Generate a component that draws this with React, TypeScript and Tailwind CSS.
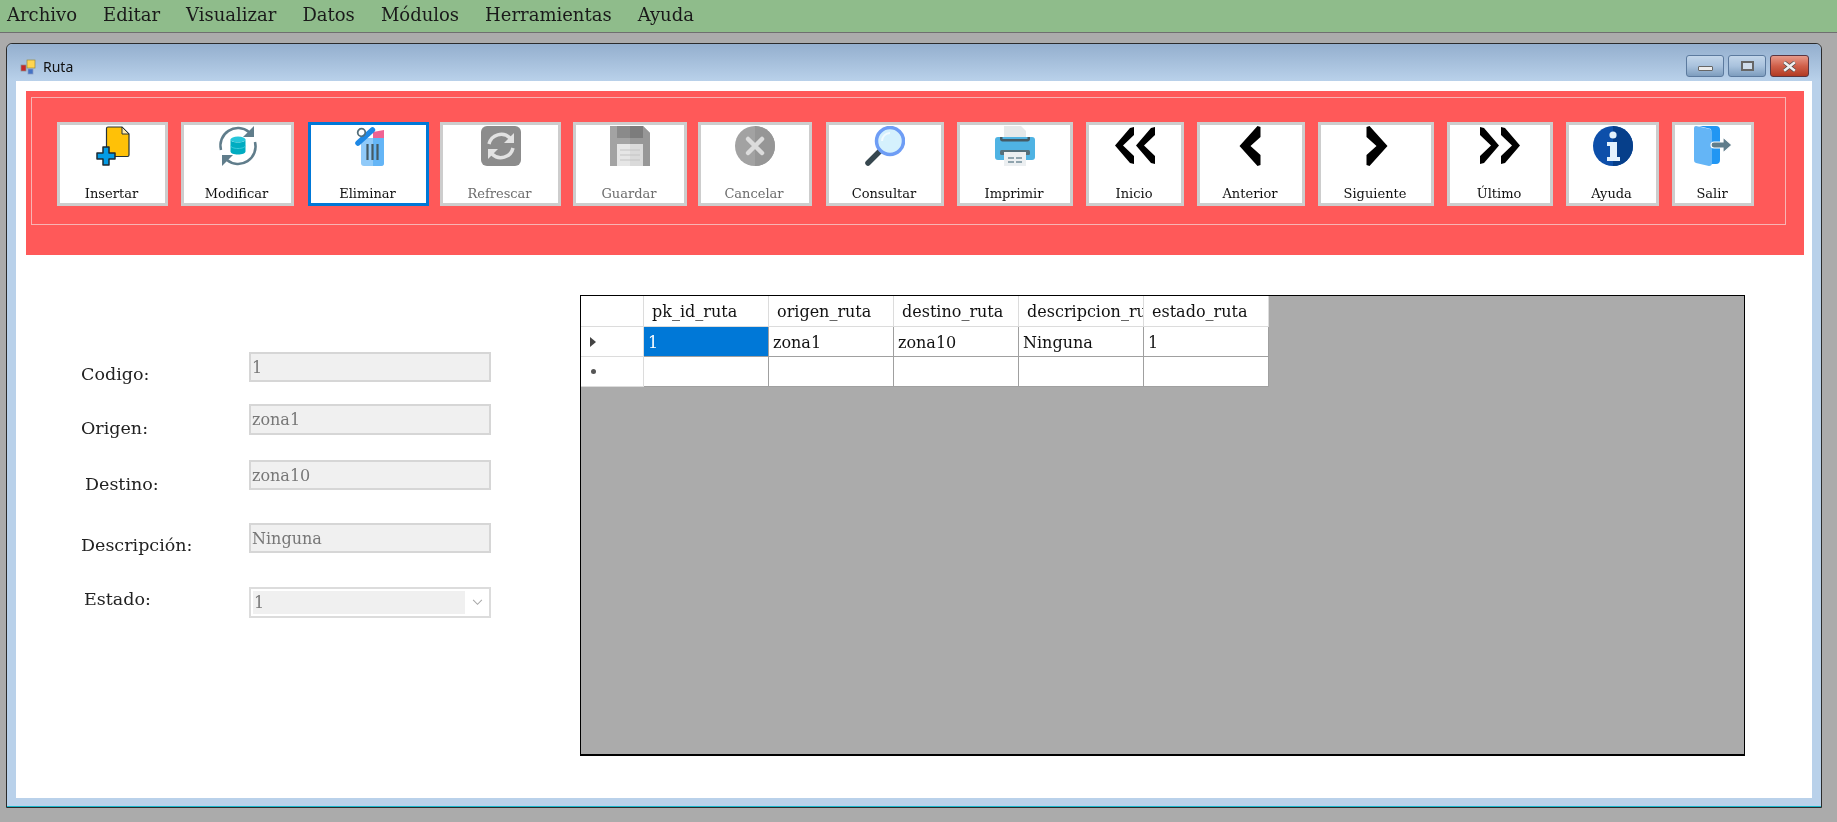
import type { ReactNode } from "react";

const slab = "font-['DejaVu_Serif','Liberation_Serif',serif]";

function InsertIcon() {
  return (
    <svg viewBox="0 0 40 40" className="h-10 w-10">
      <path d="M15 1h14l7 7v21a1.500 1.500 0 0 1-1.500 1.500H15a1.500 1.500 0 0 1-1.500-1.500V2.500A1.500 1.500 0 0 1 15 1z" fill="#ffc107" stroke="#263238" strokeWidth="1.200" />
      <path d="M29 1v7h7z" fill="#ffe9a8" stroke="#263238" strokeWidth="1" />
      <path d="M10 21h6v6h6v6h-6v6h-6v-6H4v-6h6z" fill="#039be5" stroke="#1c2b33" strokeWidth="1.500" strokeLinejoin="round" />
    </svg>
  );
}

function ModifyIcon() {
  return (
    <svg viewBox="0 0 40 40" className="h-10 w-10" fill="none">
      <path d="M3 24A17.500 17.500 0 0 1 31 6" stroke="#607d8b" strokeWidth="2.500" />
      <path d="M37 16A17.500 17.500 0 0 1 9 34" stroke="#607d8b" strokeWidth="2.500" />
      <path d="M36 0v11H25z" fill="#607d8b" />
      <path d="M4 40V29h11z" fill="#607d8b" />
      <ellipse cx="20" cy="13.500" rx="7.500" ry="3" fill="#26c6da" />
      <path d="M12.500 13.500v12c0 1.700 3.400 3 7.500 3s7.500-1.300 7.500-3v-12c0 1.700-3.400 3-7.500 3s-7.500-1.300-7.500-3z" fill="#00acc1" />
      <path d="M12.500 19.500c0 1.700 3.400 3 7.500 3s7.500-1.300 7.500-3" stroke="#4dd0e1" strokeWidth="0.800" />
    </svg>
  );
}

function DeleteIcon() {
  return (
    <svg viewBox="0 0 40 40" className="h-10 w-10">
      <path d="M12 12h23v25a3 3 0 0 1-3 3H15a3 3 0 0 1-3-3z" fill="#90caf9" />
      <path d="M24 12h11v25a3 3 0 0 1-3 3h-8z" fill="#64b5f6" />
      <path d="M24 6l11-2v8H24z" fill="#f06292" />
      <rect x="4" y="8" width="25" height="5.500" rx="2.500" transform="rotate(-42 16 11)" fill="#1e88e5" />
      <circle cx="12.500" cy="6.500" r="3.800" fill="none" stroke="#546e7a" strokeWidth="1.800" />
      <path d="M18.500 18v16M23.500 18v16M28.500 18v16" stroke="#455a64" strokeWidth="2.200" />
    </svg>
  );
}

function RefreshIcon() {
  return (
    <svg viewBox="0 0 40 40" className="h-10 w-10" fill="none">
      <rect width="40" height="40" rx="6" fill="#8c8c8c" />
      <path d="M8 18a12.500 12.500 0 0 1 21-6" stroke="#e2e2e2" strokeWidth="3.500" />
      <path d="M32 22a12.500 12.500 0 0 1-21 6" stroke="#e2e2e2" strokeWidth="3.500" />
      <path d="M33 7v10H23z" fill="#e2e2e2" />
      <path d="M7 33V23h10z" fill="#e2e2e2" />
    </svg>
  );
}

function SaveIcon() {
  return (
    <svg viewBox="0 0 40 40" className="h-10 w-10">
      <path d="M0 0h33l7 7v33H0z" fill="#a3a3a3" />
      <path d="M20 0h13l7 7v33H20z" fill="#979797" />
      <path d="M7 0h26v12H7z" fill="#8a8a8a" />
      <path d="M20 0h13v12H20z" fill="#7c7c7c" />
      <rect x="7" y="18" width="26" height="22" fill="#e6e6e6" />
      <rect x="20" y="18" width="13" height="22" fill="#dadada" />
      <path d="M10 24h20M10 29h20M10 34h20" stroke="#c4c4c4" strokeWidth="1.200" />
    </svg>
  );
}

function CancelIcon() {
  return (
    <svg viewBox="0 0 40 40" className="h-10 w-10">
      <circle cx="20" cy="20" r="20" fill="#a2a2a2" />
      <path d="M20 0a20 20 0 0 1 0 40z" fill="#969696" />
      <path d="M13 13l14 14M27 13L13 27" stroke="#dcdcdc" strokeWidth="4.500" strokeLinecap="round" />
    </svg>
  );
}

function SearchIcon() {
  return (
    <svg viewBox="0 0 40 40" className="h-10 w-10">
      <path d="M3 37l12-12" stroke="#37474f" strokeWidth="5.500" strokeLinecap="round" />
      <circle cx="25" cy="15" r="13.500" fill="#d5f1fd" stroke="#6e9df5" strokeWidth="3.500" />
      <path d="M17 15a8 8 0 0 1 8-8" stroke="#f2fbff" strokeWidth="2" fill="none" />
    </svg>
  );
}

function PrintIcon() {
  return (
    <svg viewBox="0 0 40 40" className="h-10 w-10">
      <path d="M9 0h17l5 5v10H9z" fill="#e6e9ea" />
      <path d="M3 11h34a3 3 0 0 1 3 3v17a3 3 0 0 1-3 3H3a3 3 0 0 1-3-3V14a3 3 0 0 1 3-3z" fill="#4fb3e3" />
      <path d="M5 11v2c0 1.500 1 2.500 2.500 2.500h25c1.500 0 2.500-1 2.500-2.500v-2h-2.500v2h-25v-2z" fill="#455a64" />
      <rect x="5" y="24" width="30" height="5" rx="1.500" fill="#546e7a" />
      <rect x="9" y="26" width="22" height="14" fill="#eceff1" />
      <path d="M13 31h6v2h-6zM21 31h6v2h-6zM13 35h6v2h-6zM21 35h6v2h-6z" fill="#90a4ae" />
    </svg>
  );
}

function Chevrons({ dir, double }: { dir: "left" | "right"; double?: boolean }) {
  const half = "M0 19.500L15 2l4-1v8L8 19.500 19 30v8l-4-1z";
  return (
    <svg viewBox="0 0 40 40" className={dir === "right" ? "h-10 w-10 -scale-x-100" : "h-10 w-10"}>
      {double ? (
        <>
          <path d={half} fill="#000" />
          <path d={half} transform="translate(21 0)" fill="#000" />
        </>
      ) : (
        <path d="M26.500 0l-18 20 18 20 3-1V29l-10-9 10-9V1z" fill="#000" />
      )}
    </svg>
  );
}

function InfoIcon() {
  return (
    <svg viewBox="0 0 40 40" className="h-10 w-10">
      <circle cx="20" cy="20" r="20" fill="#0d4faa" />
      <path d="M20 0a20 20 0 0 1 0 40z" fill="#063f8a" />
      <circle cx="20" cy="9" r="3.600" fill="#e3f2fd" />
      <path d="M14 16h10v15h3v4H14v-4h3V20h-3z" fill="#e3f2fd" />
    </svg>
  );
}

function ExitIcon() {
  return (
    <svg viewBox="0 0 40 40" className="h-10 w-10">
      <path d="M6 0h17a4 4 0 0 1 4 4v30a4 4 0 0 1-4 4h-5V3z" fill="#2196f3" />
      <path d="M3 0l14 3a3 3 0 0 1 2 3v31a3 3 0 0 1-3 3l-13-3a3 3 0 0 1-2-3V2a2 2 0 0 1 2-2z" fill="#64b5f6" />
      <path d="M21 16h9v-5l9 8-9 8v-5h-9a3 3 0 0 1 0-6z" fill="#607d8b" stroke="#fff" strokeWidth="1.200" />
    </svg>
  );
}

type Tool = { label: string; icon: ReactNode; cls: string; disabled?: boolean; active?: boolean };

const tools: Tool[] = [
  { label: "Insertar", icon: <InsertIcon />, cls: "w-[111px]" },
  { label: "Modificar", icon: <ModifyIcon />, cls: "w-[113px] ml-[13px]" },
  { label: "Eliminar", icon: <DeleteIcon />, cls: "w-[121px] ml-[14px]", active: true },
  { label: "Refrescar", icon: <RefreshIcon />, cls: "w-[121px] ml-[11px]", disabled: true },
  { label: "Guardar", icon: <SaveIcon />, cls: "w-[114px] ml-[12px]", disabled: true },
  { label: "Cancelar", icon: <CancelIcon />, cls: "w-[114px] ml-[11px]", disabled: true },
  { label: "Consultar", icon: <SearchIcon />, cls: "w-[118px] ml-[14px]" },
  { label: "Imprimir", icon: <PrintIcon />, cls: "w-[116px] ml-[13px]" },
  { label: "Inicio", icon: <Chevrons dir="left" double />, cls: "w-[98px] ml-[13px]" },
  { label: "Anterior", icon: <Chevrons dir="left" />, cls: "w-[108px] ml-[13px]" },
  { label: "Siguiente", icon: <Chevrons dir="right" />, cls: "w-[116px] ml-[13px]" },
  { label: "Último", icon: <Chevrons dir="right" double />, cls: "w-[106px] ml-[13px]" },
  { label: "Ayuda", icon: <InfoIcon />, cls: "w-[93px] ml-[13px]" },
  { label: "Salir", icon: <ExitIcon />, cls: "w-[82px] ml-[13px]" },
];

function ToolButton({ tool }: { tool: Tool }) {
  return (
    <div
      className={`flex h-[84px] shrink-0 flex-col items-center bg-white pt-px ${tool.cls} ${
        tool.active ? "border-[3px] border-[#0078d7]" : "border-[3px] border-[#cdcdcd]"
      }`}
    >
      {tool.icon}
      <span className={`mt-[19px] pr-[2px] text-[13px] leading-[18px] ${tool.disabled ? "text-[#6d6d6d]" : "text-[#111]"}`}>
        {tool.label}
      </span>
    </div>
  );
}

const fields = [
  { label: "Codigo:", value: "1", row: "h-[30px]", labelCls: "pt-[12px]" },
  { label: "Origen:", value: "zona1", row: "h-[31px] mt-[22px]", labelCls: "pt-[14px]" },
  { label: "Destino:", value: "zona10", row: "h-[30px] mt-[25px]", labelCls: "pt-[14px] pl-[4px]" },
  { label: "Descripción:", value: "Ninguna", row: "h-[30px] mt-[33px]", labelCls: "pt-[12px]" },
];

function FieldLabel({ text, cls }: { text: string; cls: string }) {
  return <div className={`h-full w-[168px] shrink-0 text-[17.5px] leading-[20px] text-[#222] ${cls}`}>{text}</div>;
}

const columns = ["pk_id_ruta", "origen_ruta", "destino_ruta", "descripcion_ruta", "estado_ruta"];
const firstRow = ["1", "zona1", "zona10", "Ninguna", "1"];

function DataGrid() {
  return (
    <div className="mt-[40px] h-[461px] w-[1165px] border border-b-2 border-black bg-[#ababab]">
      <div className="grid w-fit grid-cols-[63px_125px_125px_125px_125px_125px] grid-rows-[31px_30px_30px] text-[16px] text-[#111]">
        <div className="border-r border-b border-[#dcdcdc] bg-white" />
        {columns.map((c) => (
          <div key={c} className="overflow-hidden whitespace-nowrap border-r border-b border-[#dcdcdc] bg-white pl-[8px] leading-[31px]">
            {c}
          </div>
        ))}

        <div className="flex items-center border-r border-b border-[#dcdcdc] bg-white pl-[9px]">
          <span className="h-0 w-0 border-y-[5px] border-l-[6px] border-y-transparent border-l-[#444]" />
        </div>
        {firstRow.map((v, i) => (
          <div
            key={i}
            className={`border-r border-b border-[#a0a0a0] pl-[4px] leading-[31px] ${i === 0 ? "bg-[#0078d7] text-white" : "bg-white"}`}
          >
            {v}
          </div>
        ))}

        <div className="flex items-center border-r border-b border-[#dcdcdc] bg-white pl-[10px]">
          <span className="h-[5px] w-[5px] rounded-full bg-[#555]" />
        </div>
        {firstRow.map((_, i) => (
          <div key={i} className="border-r border-b border-[#a0a0a0] bg-white" />
        ))}
      </div>
    </div>
  );
}

export default function App() {
  return (
    <div className={`flex h-screen flex-col overflow-hidden bg-[#ababab] blur-[0.35px] ${slab}`}>
      <nav className="flex h-[33px] shrink-0 items-center gap-[26px] border-b border-[#6f6f6f] bg-[#8fbc8b] pb-[4px] pl-[7px] text-[18px] text-[#1a1a1a]">
        <span>Archivo</span>
        <span>Editar</span>
        <span>Visualizar</span>
        <span>Datos</span>
        <span>Módulos</span>
        <span>Herramientas</span>
        <span>Ayuda</span>
      </nav>

      <div className="mt-[10px] ml-[6px] flex h-[765px] w-[1816px] flex-col rounded-t-[6px] border border-[#2b2b2b] bg-[#b9d1ea]">
        <div className="flex h-[37px] shrink-0 items-center rounded-t-[6px] bg-gradient-to-b from-[#94afce] to-[#b9d1ea] pt-[8px] pr-[12px] pl-[13px]">
          <svg viewBox="0 0 16 16" className="h-4 w-4">
            <rect x="1" y="6" width="5" height="6" fill="#c62828" stroke="#8a8a8a" strokeWidth="0.700" />
            <rect x="7" y="1" width="8" height="8" fill="#ffd54f" stroke="#9a8a3a" strokeWidth="0.700" />
            <rect x="8" y="10" width="5" height="5" fill="#4472c4" stroke="#8a9ac4" strokeWidth="0.700" />
          </svg>
          <span className="ml-[7px] font-['Noto_Sans',sans-serif] text-[14px] text-[#111]">Ruta</span>
          <div className="mt-[-1px] ml-auto flex gap-[4px]">
            <div className="flex h-[22px] w-[38px] items-center justify-center rounded-[3px] border border-[#5c7a9e] bg-gradient-to-b from-[#c3d6ea] via-[#a9c2dd] to-[#7e9dbe]">
              <span className="mt-[4px] h-[5px] w-[15px] rounded-[1px] border border-[#666] bg-[#ececec]" />
            </div>
            <div className="flex h-[22px] w-[38px] items-center justify-center rounded-[3px] border border-[#5c7a9e] bg-gradient-to-b from-[#c3d6ea] via-[#a9c2dd] to-[#7e9dbe]">
              <span className="h-[10px] w-[13px] border-2 border-[#666] bg-[#cfdceb]" />
            </div>
            <div className="flex h-[22px] w-[39px] items-center justify-center rounded-[3px] border border-[#5b3540] bg-gradient-to-b from-[#e79a8a] via-[#d0604a] to-[#b23a22]">
              <svg viewBox="0 0 14 10" className="h-[11px] w-[15px]">
                <path d="M2 1l10 8M12 1L2 9" stroke="#4a4a4a" strokeWidth="3.600" />
                <path d="M2 1l10 8M12 1L2 9" stroke="#f1f1f1" strokeWidth="2.400" />
              </svg>
            </div>
          </div>
        </div>

        <div className="mx-[1px] flex h-[717px] w-[1812px] shrink-0 border-x-[8px] border-[#b9d1ea] bg-white">
          <div className="w-[1796px] shrink-0">
            <section className="mt-[10px] ml-[10px] h-[164px] w-[1778px] bg-[#ff5959] pt-[6px] pl-[5px]">
              <div className="flex h-[128px] w-[1755px] border border-[#f7b4b4] pt-[24px] pl-[25px]">
                {tools.map((t) => (
                  <ToolButton key={t.label} tool={t} />
                ))}
              </div>
            </section>

            <div className="flex">
              <div className="w-[564px] shrink-0 pt-[97px] pl-[65px]">
                {fields.map((f) => (
                  <div key={f.label} className={`flex ${f.row}`}>
                    <FieldLabel text={f.label} cls={f.labelCls} />
                    <div className="h-full w-[242px] border-2 border-[#d6d6d6] bg-[#f0f0f0] pl-[1px] text-[16px] leading-[28px] text-[#777]">
                      {f.value}
                    </div>
                  </div>
                ))}
                <div className="mt-[34px] flex h-[31px]">
                  <FieldLabel text="Estado:" cls="pt-[2px] pl-[3px]" />
                  <div className="flex h-full w-[242px] items-center border-2 border-[#dcdcdc] bg-white p-[2px]">
                    <div className="h-full w-[212px] bg-[#f0f0f0] pl-[1px] text-[16px] leading-[23px] text-[#777]">1</div>
                    <svg viewBox="0 0 12 8" className="ml-[7px] h-[7px] w-[11px]" fill="none">
                      <path d="M1 1l5 5 5-5" stroke="#a8a8a8" strokeWidth="1.200" />
                    </svg>
                  </div>
                </div>
              </div>
              <DataGrid />
            </div>
          </div>
        </div>

        <div className="h-[8px] shrink-0" />
        <div className="h-px shrink-0 bg-[#19b5c9]" />
      </div>
    </div>
  );
}
